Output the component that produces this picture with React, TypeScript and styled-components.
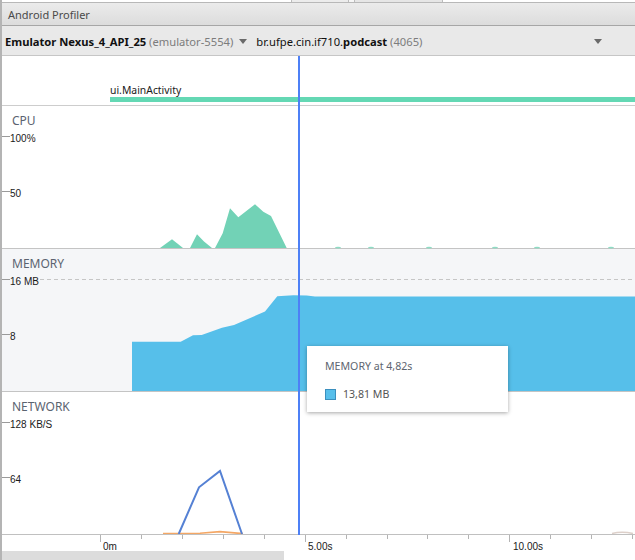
import React from 'react';
import styled, { createGlobalStyle } from 'styled-components';

const GlobalStyle = createGlobalStyle`
  html, body { margin: 0; padding: 0; background: #fff; }
  body {
    width: 635px; height: 560px; overflow: hidden;
    font-family: "Noto Sans", "Open Sans", sans-serif;
  }
`;

const UI_FONT = `"Noto Sans", "Open Sans", sans-serif`;
const CHART_FONT = `"Liberation Sans", Arial, sans-serif`;

const Window = styled.div`
  width: 635px;
  height: 560px;
  box-sizing: border-box;
  border-left: 2px solid #b4b4b4;
  display: flex;
  flex-direction: column;
  background: #fff;
  overflow: hidden;
`;

const TopStrip = styled.div`
  height: 2px;
  display: flex;
  background: #fff;
`;

const StripTab = styled.div<{ $w: number; $bg: string }>`
  width: ${(p) => p.$w}px;
  background: ${(p) => p.$bg};
  border-right: 1px solid #bcbcbc;
  flex: none;
`;

const TitleBar = styled.div`
  height: 22px;
  border-top: 1px solid #b8b8b8;
  border-bottom: 1px solid #a6a6a6;
  background: linear-gradient(#ebebeb, #dcdcdc);
  display: flex;
  align-items: center;
  padding-left: 6px;
  font-family: ${UI_FONT};
  font-size: 11px;
  color: #4a4a4a;
`;

const Toolbar = styled.div`
  height: 30px;
  box-sizing: border-box;
  border-bottom: 1px solid #c6c6c6;
  background: #e9e9e9;
  display: flex;
  align-items: center;
  padding: 1px 0 0 3px;
  font-family: ${UI_FONT};
  font-size: 11.2px;
  color: #111;
  white-space: nowrap;
`;

const Selector = styled.div<{ $last?: boolean }>`
  display: flex;
  align-items: center;
  gap: 6px;
  margin-right: ${(p) => (p.$last ? '0' : '9px')};
  flex: ${(p) => (p.$last ? '1' : 'none')};
`;

const Strong = styled.b`
  font-weight: 700;
  color: #111;
`;

const Muted = styled.span`
  color: #7c7c7c;
`;

const Caret = styled.span<{ $push?: boolean }>`
  width: 0;
  height: 0;
  border-left: 4px solid transparent;
  border-right: 4px solid transparent;
  border-top: 5px solid #6a6a6a;
  margin-left: ${(p) => (p.$push ? 'auto' : '0')};
  margin-right: ${(p) => (p.$push ? '33px' : '0')};
`;

const Main = styled.div`
  position: relative;
  display: flex;
  flex-direction: column;
`;

const EventRow = styled.div`
  height: 46px;
  border-bottom: 1px solid #cdcdcd;
  display: flex;
  flex-direction: column;
  justify-content: flex-end;
  padding: 0 0 3px 108px;
`;

const EventLabel = styled.div`
  font-family: ${UI_FONT};
  font-size: 10.4px;
  line-height: 14px;
  color: #1a1a1a;
`;

const EventBar = styled.div`
  height: 5px;
  background: #64d8b4;
`;

const Panel = styled.div<{ $bg: string; $border?: boolean }>`
  position: relative;
  height: 135px;
  background: ${(p) => p.$bg};
  border-bottom: ${(p) => (p.$border ? '1px solid #c4c4c4' : 'none')};
  padding: 7px 0 0 10px;
`;

const PanelTitle = styled.div`
  position: relative;
  z-index: 1;
  font-family: ${UI_FONT};
  font-size: 12px;
  line-height: 15px;
  color: #5b6370;
`;

const ChartSvg = styled.svg`
  position: absolute;
  left: 0;
  top: 0;
  width: 100%;
  height: 100%;
  overflow: visible;
`;

const YLabel = styled.div<{ $top: number; $bg: string }>`
  position: absolute;
  left: 8px;
  top: ${(p) => p.$top}px;
  padding-right: 1px;
  font-family: ${CHART_FONT};
  font-size: 10px;
  line-height: 12px;
  color: #1a1a1a;
  background: ${(p) => p.$bg};
  z-index: 1;
`;

const Cursor = styled.div`
  position: absolute;
  left: 296px;
  top: 0;
  bottom: -1px;
  width: 2px;
  background: #4d80f6;
  z-index: 2;
`;

const Tooltip = styled.div`
  position: absolute;
  left: 305px;
  top: 290px;
  width: 201px;
  height: 66px;
  box-sizing: border-box;
  background: #fff;
  box-shadow: 0 1px 4px rgba(0, 0, 0, 0.35);
  padding: 13px 0 0 18px;
  display: flex;
  flex-direction: column;
  gap: 14px;
  z-index: 3;
  font-family: ${UI_FONT};
  font-size: 10.6px;
  line-height: 14px;
  color: #5e6570;
`;

const LegendRow = styled.div`
  display: flex;
  align-items: center;
  gap: 7px;
  color: #555;
`;

const Swatch = styled.span`
  width: 11px;
  height: 11px;
  box-sizing: border-box;
  background: #57bfeb;
  border: 1px solid #3b8fbe;
`;

const Axis = styled.div`
  position: relative;
  height: 16px;
  border-top: 1px solid #c0c0c0;
`;

const AxisLabel = styled.div<{ $x: number }>`
  position: absolute;
  left: ${(p) => p.$x}px;
  top: 6px;
  font-family: ${CHART_FONT};
  font-size: 10px;
  line-height: 12px;
  color: #1a1a1a;
`;

const ScrollTrack = styled.div`
  height: 9px;
  display: flex;
`;

const ScrollThumb = styled.div`
  width: 282px;
  background: #dcdcdc;
`;

type Pt = [number, number];
const toPath = (pts: Pt[]) =>
  pts.map((p, i) => `${i ? 'L' : 'M'}${p[0]} ${p[1]}`).join(' ') + ' Z';
const toLine = (pts: Pt[]) =>
  pts.map((p, i) => `${i ? 'L' : 'M'}${p[0]} ${p[1]}`).join(' ');

const cpuShapes: Pt[][] = [
  [[160, 248], [172, 239.3], [183, 248]],
  [[190, 248], [197, 234.3], [204, 241.5], [212, 248]],
  [[215, 248], [222.7, 233.3], [230, 208.3], [238.3, 217.3], [255, 204.3], [263.3, 211.7], [271, 216], [286.7, 248]],
];
const cpuDots = [338, 371, 429, 495, 537, 611];

const memoryShape: Pt[] = [
  [132, 391], [132, 341.7], [180.7, 341.7], [193, 335.2], [201.7, 335], [222, 327.8],
  [234, 325], [265, 311.5], [277.3, 296.2], [293.3, 295.2], [306.7, 295.4],
  [315, 296.6], [640, 296.6], [640, 391],
];

const netBlue: Pt[] = [[178.7, 534], [199, 487.3], [220, 471], [242, 534]];
const netOrange: Pt[] = [[163, 533.6], [200, 533.2], [220, 531.6], [243, 533.6]];

const ticks = Array.from({ length: 14 }, (_, k) => 100 + 40.93 * k);

const YTicks: React.FC = () => (
  <g stroke="#9a9a9a" strokeWidth={1}>
    <line x1={0} x2={8} y1={30.5} y2={30.5} />
    <line x1={0} x2={8} y1={85.5} y2={85.5} />
  </g>
);

export default function App() {
  return (
    <>
      <GlobalStyle />
      <Window>
        <TopStrip>
          <StripTab $w={289} $bg="#ffffff" />
          <StripTab $w={56} $bg="#ececec" />
          <StripTab $w={5} $bg="#f6f6f6" />
          <StripTab $w={87} $bg="#e6e6e6" />
        </TopStrip>
        <TitleBar>Android Profiler</TitleBar>
        <Toolbar>
          <Selector>
            <span>
              <Strong>Emulator Nexus_4_API_25</Strong> <Muted>(emulator-5554)</Muted>
            </span>
            <Caret />
          </Selector>
          <Selector $last>
            <span>
              br.ufpe.cin.if710.<Strong>podcast</Strong> <Muted>(4065)</Muted>
            </span>
            <Caret $push />
          </Selector>
        </Toolbar>
        <Main>
          <EventRow>
            <EventLabel>ui.MainActivity</EventLabel>
            <EventBar />
          </EventRow>

          <Panel $bg="#ffffff" $border>
            <PanelTitle>CPU</PanelTitle>
            <ChartSvg>
              <YTicks />
              <g transform="translate(-2,-106)">
                {cpuShapes.map((s, i) => (
                  <path key={i} d={toPath(s)} fill="#72d2b6" />
                ))}
                {cpuDots.map((x) => (
                  <ellipse key={x} cx={x} cy={247.6} rx={3} ry={0.9} fill="#8fdcc4" />
                ))}
              </g>
            </ChartSvg>
            <YLabel $top={27} $bg="transparent">100%</YLabel>
            <YLabel $top={82} $bg="transparent">50</YLabel>
          </Panel>

          <Panel $bg="#f5f6f8" $border>
            <PanelTitle>MEMORY</PanelTitle>
            <ChartSvg>
              <YTicks />
              <line x1={38} x2={640} y1={30.5} y2={30.5} stroke="#c6c6c6" strokeDasharray="4 3" />
              <g transform="translate(-2,-249)">
                <path d={toPath(memoryShape)} fill="#56bfea" />
              </g>
            </ChartSvg>
            <YLabel $top={27} $bg="#f5f6f8">16 MB</YLabel>
            <YLabel $top={82} $bg="transparent">8</YLabel>
          </Panel>

          <Panel $bg="#ffffff">
            <PanelTitle>NETWORK</PanelTitle>
            <ChartSvg>
              <YTicks />
              <g transform="translate(-2,-392)">
                <path d={toLine(netOrange)} fill="none" stroke="#f4a765" strokeWidth={1.6} />
                <path d="M612 533.5 Q622 531 633 533.5" fill="none" stroke="#ddd0ca" strokeWidth={1.4} />
                <path d={toLine(netBlue)} fill="none" stroke="#5581d4" strokeWidth={2} strokeLinejoin="miter" />
              </g>
            </ChartSvg>
            <YLabel $top={27} $bg="transparent">128 KB/S</YLabel>
            <YLabel $top={82} $bg="transparent">64</YLabel>
          </Panel>

          <Cursor />
          <Tooltip>
            <div>MEMORY at 4,82s</div>
            <LegendRow>
              <Swatch />
              <span>13,81 MB</span>
            </LegendRow>
          </Tooltip>
        </Main>
        <Axis>
          <ChartSvg>
            <g transform="translate(-2,-535)" stroke="#b4b4b4" strokeWidth={1}>
              {ticks.map((x, i) => (
                <line
                  key={i}
                  x1={Math.round(x) + 0.5}
                  x2={Math.round(x) + 0.5}
                  y1={535}
                  y2={i % 5 === 0 ? 542 : 539}
                />
              ))}
            </g>
          </ChartSvg>
          <AxisLabel $x={101}>0m</AxisLabel>
          <AxisLabel $x={306}>5.00s</AxisLabel>
          <AxisLabel $x={511}>10.00s</AxisLabel>
        </Axis>
        <ScrollTrack>
          <ScrollThumb />
        </ScrollTrack>
      </Window>
    </>
  );
}
